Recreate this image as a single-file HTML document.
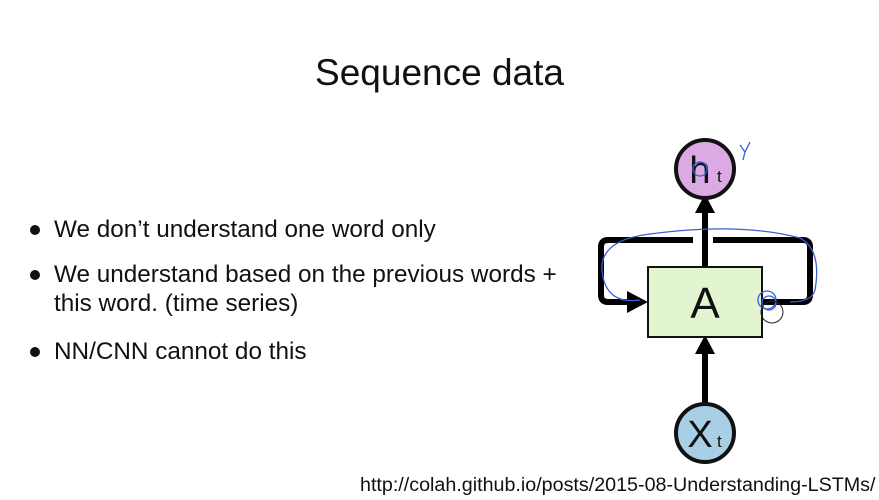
<!DOCTYPE html>
<html><head><style>
body{margin:0;width:879px;height:500px;background:#fff;position:relative;font-family:"Liberation Sans",sans-serif;overflow:hidden}
.t{position:absolute;left:0;width:879px;top:52px;text-align:center;font-size:37px;color:#111}
.b{position:absolute;left:30px;font-size:24.3px;color:#111;line-height:29px;white-space:nowrap}
.b:before{content:"";position:absolute;left:0;top:10px;width:10px;height:10px;border-radius:50%;background:#111}
.b span{display:block;padding-left:24px}
.u{position:absolute;left:360px;top:474px;font-size:19.7px;color:#111;white-space:nowrap}
</style></head><body>
<div class="t">Sequence data</div>
<div class="b" style="top:215px"><span>We don’t understand one word only</span></div>
<div class="b" style="top:260px"><span>We understand based on the previous words +<br>this word. (time series)</span></div>
<div class="b" style="top:337px"><span>NN/CNN cannot do this</span></div>
<svg style="position:absolute;left:0;top:0" width="879" height="500">
<g stroke="#000" stroke-width="6" fill="none" stroke-linejoin="round">
<path d="M693 240 H608 Q601 240 601 247 V295 Q601 302 608 302 H630"/>
<path d="M713 240 H803 Q810 240 810 247 V295 Q810 302 803 302 H762"/>
<line x1="705" y1="267" x2="705" y2="210"/>
<line x1="705" y1="403" x2="705" y2="350"/>
</g>
<g fill="#000">
<polygon points="627,291 648,302 627,313"/>
<polygon points="695,213 715,213 705,194"/>
<polygon points="695,354 715,354 705,335"/>
</g>
<rect x="648" y="267" width="114" height="70" fill="#e2f4d0" stroke="#111" stroke-width="2"/>
<text x="705" y="318" text-anchor="middle" font-size="44" font-family="Liberation Sans" fill="#111">A</text>
<circle cx="705" cy="169" r="29" fill="#dcaae3" stroke="#111" stroke-width="4"/>
<text x="700" y="183" text-anchor="middle" font-size="38" font-family="Liberation Sans" fill="#111">h</text>
<text x="717" y="182" font-size="17" font-family="Liberation Sans" fill="#111">t</text>
<circle cx="705" cy="433" r="29" fill="#a8cfe6" stroke="#111" stroke-width="4"/>
<text x="700" y="447" text-anchor="middle" font-size="38" font-family="Liberation Sans" fill="#111">X</text>
<text x="717" y="447" font-size="17" font-family="Liberation Sans" fill="#111">t</text>
<g stroke="#3a5fd0" stroke-width="1.3" fill="none">
<path d="M640 300 Q605 305 602 270 Q600 240 650 234 Q740 222 800 238 Q822 250 815 290 Q812 302 790 302"/>
<circle cx="767" cy="300" r="9"/><circle cx="769" cy="303" r="7"/>
<path d="M740 145 L745 152 M750 142 L745 152 L743 160"/>
<circle cx="700" cy="169" r="7"/>
</g>
<circle cx="772" cy="312" r="11" fill="none" stroke="#222" stroke-width="1"/>
</svg>
<div class="u">http://colah.github.io/posts/2015-08-Understanding-LSTMs/</div>
</body></html>
